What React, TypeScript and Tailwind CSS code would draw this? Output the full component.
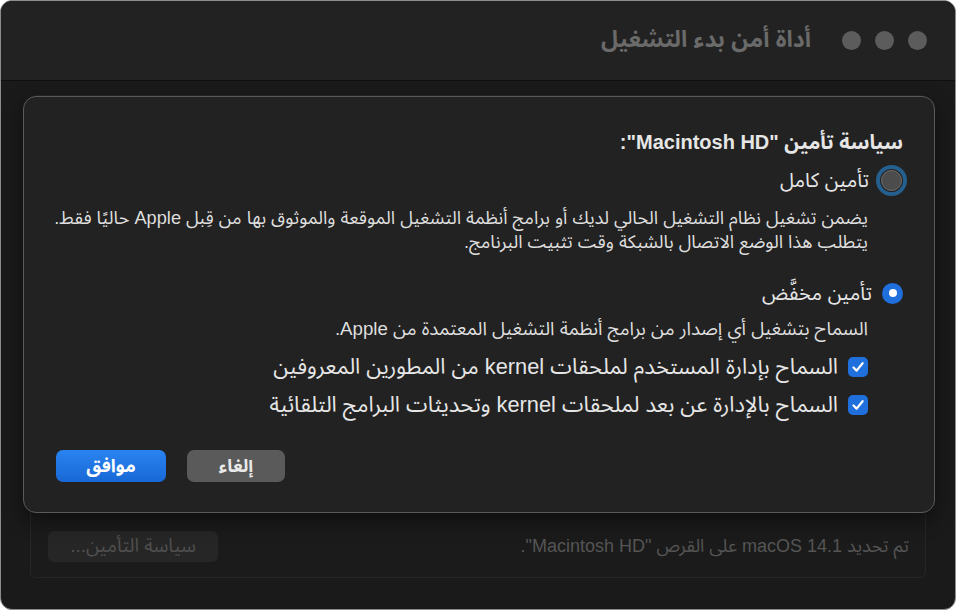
import React from "react";

const font = { fontFamily: '"Liberation Sans", "Noto Sans Arabic", "DejaVu Sans", sans-serif' };

function Check() {
  return (
    <span className="w-[20px] h-[20px] rounded-[5px] bg-[#1f6fdd] flex items-center justify-center shrink-0">
      <svg width="14" height="14" viewBox="0 0 14 14" fill="none">
        <path d="M2.5 7.5 L5.6 10.6 L11.6 3.2" stroke="white" strokeWidth="2.2" strokeLinecap="round" strokeLinejoin="round" />
      </svg>
    </span>
  );
}

export default function App() {
  return (
    <div className="w-[958px] h-[612px] bg-white" style={font}>
      <div dir="rtl" className="relative w-[956px] h-[610px] rounded-[12px] border border-[#8c8c8c] bg-[#1a1a1a] overflow-hidden flex flex-col">
        {/* Title bar */}
        <div className="h-[80px] shrink-0 bg-[#222222] border-b border-[#0f0f0f] flex items-center pr-[28px] gap-[31px]">
          <div className="flex items-center gap-[14px]">
            <span className="w-[19px] h-[19px] rounded-full bg-[#5c5c5c]" />
            <span className="w-[19px] h-[19px] rounded-full bg-[#5c5c5c]" />
            <span className="w-[19px] h-[19px] rounded-full bg-[#5c5c5c]" />
          </div>
          <div className="text-[23px] font-bold text-[#6a6a6a] leading-none pb-[2px]">أداة أمن بدء التشغيل</div>
        </div>

        {/* Window body (behind the sheet) */}
        <div className="flex-1 px-[29px] pt-[14px] pb-[31px] flex">
          <div className="flex-1 rounded-[6px] border border-[#262626] bg-[#1b1b1b] flex items-end justify-between pr-[16px] pl-[17px] pb-[15px]">
            <div className="h-[31px] flex items-center text-[18px] text-[#555555]">
              تم تحديد macOS 14.1 على القرص "Macintosh HD".
            </div>
            <div className="w-[170px] h-[31px] rounded-[6px] bg-[#262626] flex items-center justify-center text-[19px] text-[#4f4f4f]">
              سياسة التأمين...
            </div>
          </div>
        </div>

        {/* Sheet */}
        <div className="absolute left-[22px] top-[95px] w-[912px] h-[417px] rounded-[13px] border border-[#5a5a5a] bg-[#222222] shadow-[0_8px_20px_rgba(0,0,0,0.45)] flex flex-col pt-[33px] pr-[31px] pl-[32px]">
          <div className="h-[24px] flex items-center text-[20px] font-bold text-[#e6e6e6]">
            سياسة تأمين "Macintosh HD":
          </div>

          <div className="mt-[10px] h-[32px] flex items-center gap-[7px] -mr-[4px]">
            <span className="w-[31px] h-[31px] rounded-full border-[4px] border-[#245f8d] flex items-center justify-center shrink-0">
              <span className="w-[21px] h-[21px] rounded-full bg-[#4c4c4c] border border-[#707070]" />
            </span>
            <span className="text-[20px] text-[#e6e6e6]">تأمين كامل</span>
          </div>

          <div className="mt-[10px] mr-[35px] text-[18.2px] leading-[24px] text-[#dedede] whitespace-nowrap">
            <div>يضمن تشغيل نظام التشغيل الحالي لديك أو برامج أنظمة التشغيل الموقعة والموثوق بها من قِبل Apple حاليًا فقط.</div>
            <div>يتطلب هذا الوضع الاتصال بالشبكة وقت تثبيت البرنامج.</div>
          </div>

          <div className="mt-[25px] h-[28px] flex items-center gap-[10px]">
            <span className="w-[21px] h-[21px] rounded-full bg-[#1f6fdd] flex items-center justify-center shrink-0">
              <span className="w-[8px] h-[8px] rounded-full bg-white" />
            </span>
            <span className="text-[20px] text-[#e6e6e6]">تأمين مخفَّض</span>
          </div>

          <div className="mt-[10px] mr-[35px] h-[24px] flex items-center text-[18.7px] text-[#dedede] whitespace-nowrap">
            السماح بتشغيل أي إصدار من برامج أنظمة التشغيل المعتمدة من Apple.
          </div>

          <div className="mt-[11px] mr-[35px] h-[30px] flex items-center gap-[10px] whitespace-nowrap">
            <Check />
            <span className="text-[21.8px] text-[#e6e6e6]">السماح بإدارة المستخدم لملحقات kernel من المطورين المعروفين</span>
          </div>
          <div className="mt-[8px] mr-[35px] h-[30px] flex items-center gap-[10px] whitespace-nowrap">
            <Check />
            <span className="text-[21.8px] text-[#e6e6e6]">السماح بالإدارة عن بعد لملحقات kernel وتحديثات البرامج التلقائية</span>
          </div>

          <div className="mt-[30px] flex justify-end gap-[21px]">
            <button className="w-[98px] h-[32px] rounded-[7px] bg-[#5a5a5a] text-[18px] font-bold text-[#e8e8e8]">إلغاء</button>
            <button className="w-[110px] h-[32px] rounded-[7px] bg-gradient-to-b from-[#2a84f0] to-[#1868d6] text-[18px] font-bold text-white">موافق</button>
          </div>
        </div>
      </div>
    </div>
  );
}
